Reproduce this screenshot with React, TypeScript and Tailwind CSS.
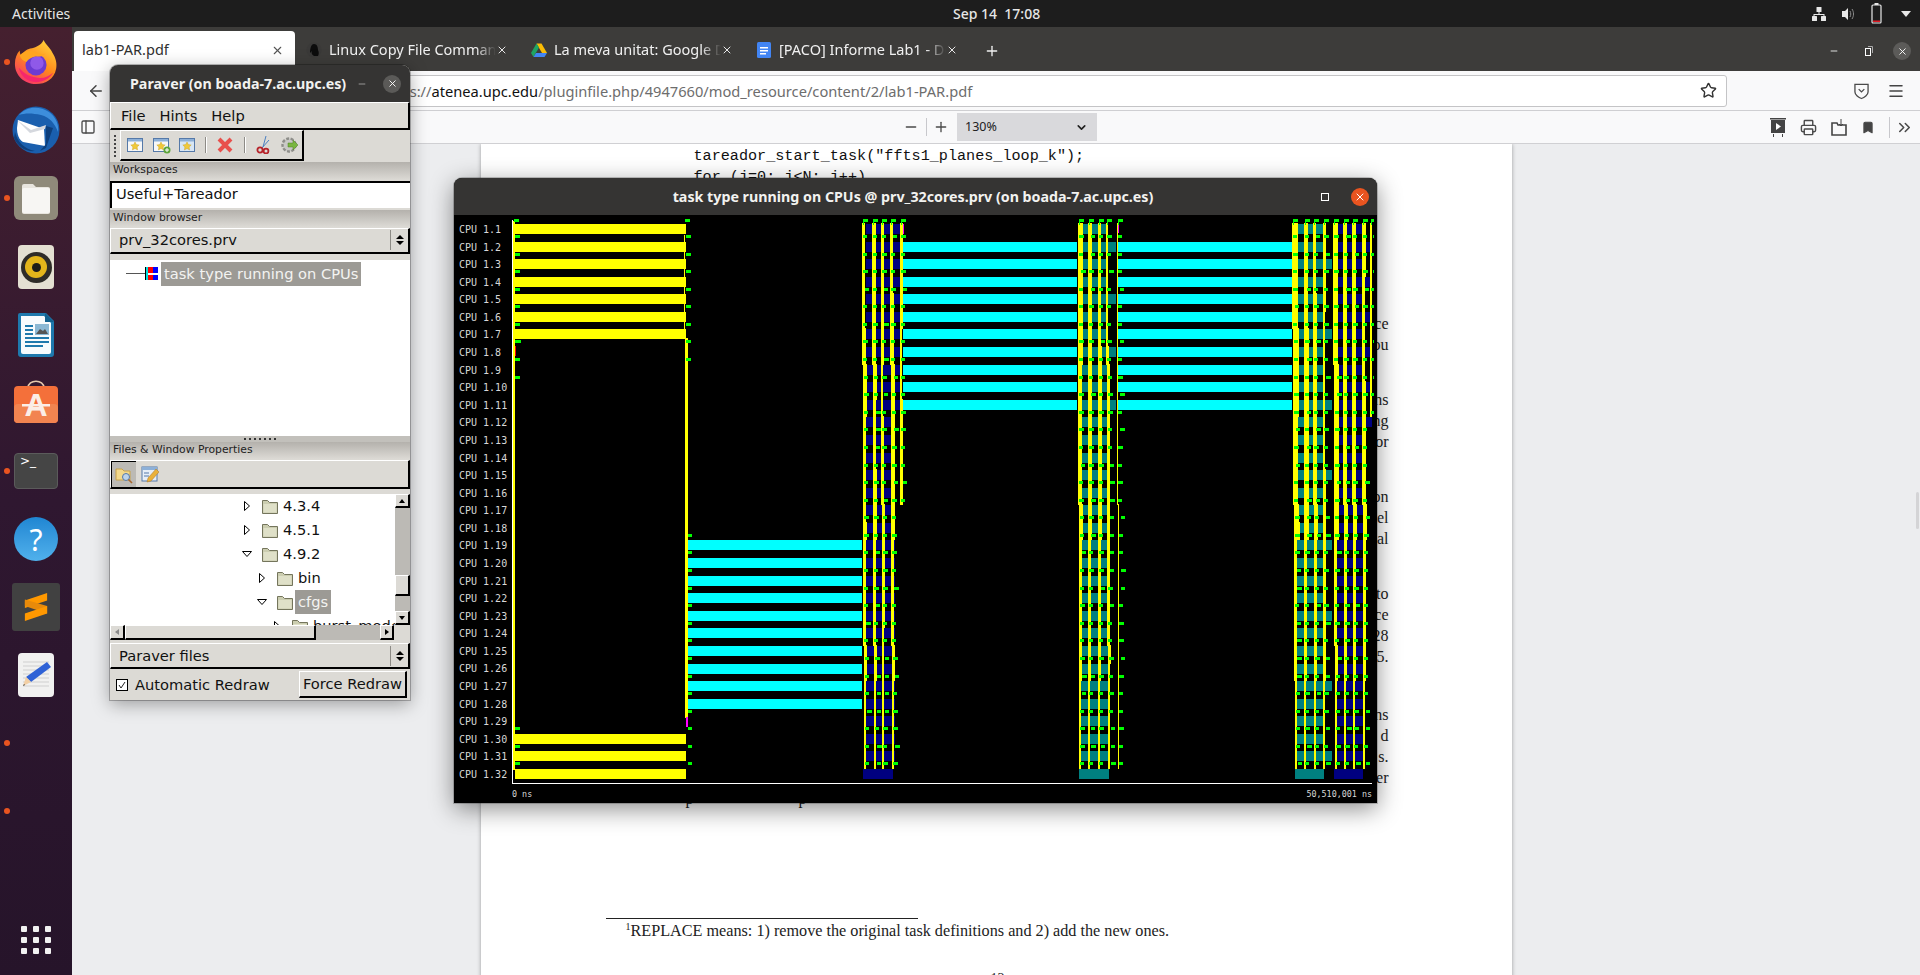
import { ArrowLeft, Bookmark, ChevronDown, ChevronsRight, Menu, Minus, PanelLeft, Plus, Printer, Star, X } from "lucide-react";

const gtk = { fontFamily: '"DejaVu Sans", sans-serif' };
const ui = { fontFamily: '"Noto Sans", "Open Sans", sans-serif' };

/* ---------- timeline data ---------- */
type R = { x: number; y: number; w: number; h: number; f: string };

const YELLOW = "#ffff00";
const CYAN = "#00ffff";
const GREEN = "#00ff00";
const NAVY = "#000080";
const TEAL = "#008080";
const MAGENTA = "#ff00ff";

const rowTop = (i: number) => Math.round(224 + 17.58 * i);

let seed = 4711;
const rnd = () => {
  seed = (seed * 16807) % 2147483647;
  return seed / 2147483647;
};

function buildChart() {
  const bars: R[] = [];
  const lines: R[] = [];
  const flags: R[] = [];
  const put = (a: R[], x: number, y: number, w: number, h: number, f: string) => a.push({ x, y, w, h, f });

  for (let r = 0; r < 32; r++) {
    const y = rowTop(r);
    if (r < 7) put(bars, 514, y, 172, 10, YELLOW);
    if (r >= 29) put(bars, 515, y, 171, 10, YELLOW);
    if (r >= 18 && r < 28) put(bars, 687, y, 175, 10, CYAN);
    if (r >= 1 && r < 11) {
      put(bars, 903, y, 174, 10, CYAN);
      put(bars, 1118, y, 174, 10, CYAN);
    }
    // task blocks of the three bursts
    if (r === 31) {
      put(bars, 863, y, 30, 10, NAVY);
      put(bars, 1079, y, 30, 10, TEAL);
      put(bars, 1295, y, 29, 10, TEAL);
      put(bars, 1334, y, 29, 10, NAVY);
    } else {
      put(bars, 866, y, r < 11 ? 35 : 29, 10, NAVY);
      put(bars, 1080, y, r % 3 === 1 && r < 12 ? 36 : 28, 10, TEAL);
      put(bars, 1295, y, r % 4 === 2 ? 37 : 28, 10, TEAL);
      put(bars, 1335, y, r < 12 && r % 2 === 1 ? 37 : 29, 10, NAVY);
    }
  }

  // long lines on both ends of the first block
  put(lines, 513, 221, 2, 549, YELLOW);
  put(lines, 685, 338, 3, 380, YELLOW);
  put(lines, 684, 235, 1, 100, YELLOW);
  put(lines, 515, 346, 1, 10, "#ff0000");
  put(lines, 686, 717, 2, 10, MAGENTA);
  put(lines, 903, 224, 1, 10, MAGENTA);
  put(lines, 1118, 225, 1, 8, MAGENTA);

  const columns = [
    { x: 862, xEnd: 864, to: 31, w: 4 },
    { x: 872, xEnd: 874, to: 31, w: 4 },
    { x: 881, xEnd: 882, to: 31, w: 3 },
    { x: 890, xEnd: 892, to: 31, w: 4 },
    { x: 900, xEnd: 900, to: 16, w: 3 },
    { x: 1078, xEnd: 1079, to: 31, w: 5 },
    { x: 1088, xEnd: 1088, to: 31, w: 4 },
    { x: 1098, xEnd: 1098, to: 31, w: 4 },
    { x: 1106, xEnd: 1108, to: 31, w: 3 },
    { x: 1117, xEnd: 1118, to: 31, w: 1 },
    { x: 1292, xEnd: 1295, to: 31, w: 6 },
    { x: 1304, xEnd: 1304, to: 31, w: 5 },
    { x: 1313, xEnd: 1314, to: 31, w: 4 },
    { x: 1323, xEnd: 1323, to: 31, w: 3 },
    { x: 1333, xEnd: 1335, to: 31, w: 5 },
    { x: 1343, xEnd: 1344, to: 31, w: 4 },
    { x: 1352, xEnd: 1353, to: 31, w: 4 },
    { x: 1362, xEnd: 1363, to: 31, w: 4 },
    { x: 1370, xEnd: 1370, to: 11, w: 2 },
  ];

  for (const c of columns) {
    // flag on top of the column
    put(flags, c.x + 1, 219, 5, 3, GREEN);
    put(flags, c.x + 1, 222, 1, 3, GREEN);
    let thick = c.w;
    let hold = 0;
    for (let r = 0; r < c.to; r++) {
      const base = Math.round(c.x + (c.xEnd - c.x) * (r / 31));
      if (hold <= 0) {
        thick = c.w - (rnd() < 0.3 && c.w > 2 ? 1 : 0);
        hold = 3 + Math.floor(rnd() * 5);
      }
      hold--;
      const w = r >= 26 ? Math.min(thick, 2) : r >= 18 ? Math.min(thick, 3) : thick;
      put(lines, base, rowTop(r) - 1, w, rowTop(r + 1) - rowTop(r) + 1, YELLOW);
      put(flags, base + 1 + (rnd() < 0.25 ? 2 : 0), rowTop(r) + 11, 4 + (rnd() < 0.3 ? 1 : 0), 3, GREEN);
    }
  }

  // flags around the first block
  for (let r = 0; r < 31; r++) {
    const y = rowTop(r) + 11;
    if (r < 9 || r >= 28) put(flags, 515, y, r === 6 ? 6 : 5, 3, GREEN);
    if (r < 8) put(flags, 686, y, 5, 3, GREEN);
    if (r >= 17) put(flags, 688, y, 4, 3, GREEN);
  }
  put(flags, 514, 219, 5, 3, GREEN);
  put(flags, 685, 219, 5, 3, GREEN);
  return [...bars, ...lines, ...flags];
}

const chartRects = buildChart();

function TimelineChart() {
  return (
    <svg viewBox="512 215 862 570" width={862} height={570} shapeRendering="crispEdges" className="block">
      <rect x={512} y={220} width={1} height={564} fill="#ffffff" />
      <rect x={512} y={783} width={860} height={1} fill="#ffffff" />
      {chartRects.map((r, i) => (
        <rect key={i} x={r.x} y={r.y} width={r.w} height={r.h} fill={r.f} />
      ))}
    </svg>
  );
}

/* ---------- dock icons ---------- */
function Firefox() {
  return (
    <svg viewBox="0 0 48 48" className="h-[46px] w-[46px]">
      <defs>
        <linearGradient id="ff" x1="0.8" y1="0" x2="0.2" y2="1">
          <stop offset="0" stopColor="#ffd43a" />
          <stop offset="0.5" stopColor="#ff8a1c" />
          <stop offset="1" stopColor="#f5306e" />
        </linearGradient>
      </defs>
      <path d="M32 1c2 5 7 8 9 13 4 6 5 12 4 17-2 11-11 16-21 16C12 47 2 38 2 26c0-6 2-11 5-14 0 3 1 5 2 6 1-4 5-7 9-8 5-1 11-3 14-9z" fill="url(#ff)" />
      <circle cx="24" cy="27" r="11" fill="#6b3bd1" />
      <circle cx="25" cy="25" r="7" fill="#8f59e8" />
      <path d="M7 17c5-5 12-6 18-3 3 2 6 2 9 1-3 3-7 4-10 3-5 1-8 3-10 6-3-1-6-3-7-7z" fill="#ffa51f" />
      <path d="M6 30c2 9 9 15 18 15 7 0 14-3 18-10-5 5-12 7-19 5-7-1-12-5-17-10z" fill="#f5276c" />
    </svg>
  );
}

function Thunderbird() {
  return (
    <svg viewBox="0 0 50 50" className="h-[50px] w-[50px]">
      <circle cx="25" cy="25" r="23.5" fill="#1a5fae" />
      <path d="M8 10c6-8 20-10 30-3 7 5 10 13 9 20-3-8-8-15-17-17C21 8 14 8 8 10z" fill="#3d8edc" />
      <path d="M7 15l26 9 0 0 1 17-22-4c-4-2-6-8-6-14z" fill="#ffffff" />
      <path d="M6 15l14 10 15-5-1 4-15 4z" fill="#d5d8de" />
      <path d="M35 21l7 2-7 20-6 3 6-7z" fill="#0e3f7c" />
      <path d="M4 27c2 9 9 17 20 19-9 1-17-4-21-13z" fill="#0e3f7c" />
    </svg>
  );
}

function Files() {
  return (
    <div className="flex h-[44px] w-[44px] items-center justify-center rounded-[6px] bg-[#8f8a7a]">
      <svg viewBox="0 0 32 32" className="h-[32px] w-[32px]">
        <path d="M2 4a2 2 0 012-2h9l3 3h12a2 2 0 012 2v23a2 2 0 01-2 2H4a2 2 0 01-2-2z" fill="#e8e5de" />
        <path d="M2 8a2 2 0 012-2h24a2 2 0 012 2v21a2 2 0 01-2 2H4a2 2 0 01-2-2z" fill="#f7f6f3" />
      </svg>
    </div>
  );
}

function Rhythmbox() {
  return (
    <div className="flex h-[44px] w-[36px] items-center justify-center rounded-[4px] bg-[#e4e0d2]">
      <div className="flex h-[31px] w-[31px] items-center justify-center rounded-full bg-[#2e2c28]">
        <div className="flex h-[22px] w-[22px] items-center justify-center rounded-full bg-[#e3b51b]">
          <div className="h-[9px] w-[9px] rounded-full bg-[#1d1c19]" />
        </div>
      </div>
    </div>
  );
}

function Writer() {
  return (
    <svg viewBox="0 0 36 44" className="h-[44px] w-[36px]">
      <path d="M2 0h26l8 8v33a3 3 0 01-3 3H3a3 3 0 01-3-3V2a2 2 0 012-2z" fill="#1e79ad" />
      <path d="M3 3h23l7 7v29a2 2 0 01-2 2H5a2 2 0 01-2-2z" fill="#f7fbfd" />
      <path d="M27 0l9 9h-9z" fill="#13618e" />
      <rect x="7" y="12" width="8" height="2" fill="#1e79ad" />
      <rect x="7" y="16" width="8" height="2" fill="#1e79ad" />
      <rect x="7" y="20" width="8" height="2" fill="#1e79ad" />
      <rect x="17" y="11" width="14" height="11" fill="#8bb8d4" />
      <path d="M18 21l4-5 3 2 2-2 3 5z" fill="#555" />
      <rect x="7" y="24" width="24" height="2" fill="#1e79ad" />
      <rect x="7" y="28" width="24" height="2" fill="#1e79ad" />
      <rect x="7" y="32" width="18" height="2" fill="#1e79ad" />
    </svg>
  );
}

function Software() {
  return (
    <svg viewBox="0 0 46 44" className="h-[44px] w-[46px]">
      <path d="M15 8c0-9 16-9 16 0" fill="none" stroke="#e7c9ad" strokeWidth="1.6" />
      <rect x="1" y="6" width="44" height="37" rx="4" fill="#f4703a" />
      <rect x="1" y="24" width="44" height="19" rx="4" fill="#f28450" />
      <text x="23" y="36" textAnchor="middle" fontSize="32" fontWeight="700" fill="#fbeee7" fontFamily="Liberation Sans, sans-serif">A</text>
      <rect x="9" y="24" width="28" height="2.5" fill="#fbeee7" />
    </svg>
  );
}

function Terminal() {
  return (
    <div className="h-[36px] w-[44px] rounded-[4px] border border-[#5b5b5b] bg-[#454545] pl-[5px] text-[12px] leading-[14px] text-white" style={gtk}>
      &gt;_
    </div>
  );
}

function Help() {
  return (
    <div className="flex h-[44px] w-[44px] items-center justify-center rounded-full bg-gradient-to-b from-[#1f86d2] to-[#50b1ec] text-[30px] text-white" style={ui}>
      ?
    </div>
  );
}

function Sublime() {
  return (
    <div className="flex h-[48px] w-[48px] items-center justify-center rounded-[3px] bg-[#414141]">
      <svg viewBox="0 0 28 32" className="h-[32px] w-[26px]">
        <path d="M26 1L2 9v8l24-8z" fill="#ff9800" />
        <path d="M2 15l24 8v-8L2 8z" fill="#e88a0a" />
        <path d="M26 15L2 23v8l24-8z" fill="#ff9800" />
      </svg>
    </div>
  );
}

function Gedit() {
  return (
    <svg viewBox="0 0 36 44" className="h-[44px] w-[36px]">
      <rect width="36" height="44" rx="4" fill="#f1f1f0" />
      <g stroke="#cfcfcf" strokeWidth="1">
        <path d="M5 9h26M5 13h26M5 17h26M5 21h26M5 25h26M5 29h26M5 33h26" />
      </g>
      <path d="M29 9l4 5-20 15-5-5z" fill="#2f62d6" />
      <path d="M8 24l5 5-8 4z" fill="#f2cfa4" />
      <path d="M6 31l-1 2 2-1z" fill="#333" />
    </svg>
  );
}

function DockItem({ children, running, className }: { children: React.ReactNode; running?: boolean; className: string }) {
  return (
    <div className={`relative flex w-[72px] items-center justify-center ${className}`}>
      {running && <div className="absolute top-1/2 left-[4px] h-[6px] w-[6px] -translate-y-1/2 rounded-full bg-[#e95420]" />}
      {children}
    </div>
  );
}

function Dock() {
  return (
    <div className="flex h-full w-[72px] shrink-0 flex-col bg-gradient-to-b from-[#45202f] via-[#2f1730] to-[#26142a]">
      <DockItem running className="mt-[5px] h-[60px]"><Firefox /></DockItem>
      <DockItem className="mt-[8px] h-[60px]"><Thunderbird /></DockItem>
      <DockItem running className="mt-[8px] h-[60px]"><Files /></DockItem>
      <DockItem className="mt-[9px] h-[60px]"><Rhythmbox /></DockItem>
      <DockItem className="mt-[8px] h-[60px]"><Writer /></DockItem>
      <DockItem className="mt-[7px] h-[60px]"><Software /></DockItem>
      <DockItem running className="mt-[9px] h-[60px]"><Terminal /></DockItem>
      <DockItem className="mt-[8px] h-[60px]"><Help /></DockItem>
      <DockItem className="mt-[8px] h-[60px]"><Sublime /></DockItem>
      <DockItem className="mt-[8px] h-[60px]"><Gedit /></DockItem>
      <DockItem running className="mt-[8px] h-[60px]"><span /></DockItem>
      <DockItem running className="mt-[8px] h-[60px]"><span /></DockItem>
      <div className="mx-auto mt-[85px] grid w-[30px] grid-cols-3 gap-x-[6px] gap-y-[5px]">
        {Array.from({ length: 9 }).map((_, i) => (
          <div key={i} className="h-[6px] w-[6px] rounded-[1px] bg-[#f2f2f2]" />
        ))}
      </div>
    </div>
  );
}

/* ---------- top panel ---------- */
function TopBar() {
  return (
    <div className="relative flex h-[27px] shrink-0 items-center bg-[#1d1d1d] pl-[12px] text-[14px] text-[#e6e6e6]" style={ui}>
      <span>Activities</span>
      <span className="absolute left-[953px] font-medium whitespace-pre">Sep 14  17:08</span>
      <div className="ml-auto flex items-center gap-[13px] pr-[9px]">
        <svg viewBox="0 0 16 16" className="h-[16px] w-[16px]" fill="#e8e8e8">
          <rect x="5.5" y="1" width="5" height="5" rx="0.5" />
          <rect x="1" y="10" width="5" height="5" rx="0.5" />
          <rect x="10" y="10" width="5" height="5" rx="0.5" />
          <path d="M7.5 6h1v2h5v2h-1V9h-9v1h-1V8h5z" />
        </svg>
        <svg viewBox="0 0 16 16" className="h-[16px] w-[16px]">
          <path d="M2 5h3l3-3v12l-3-3H2z" fill="#e8e8e8" />
          <path d="M10 5c1 2 1 4 0 6M12 3c2 3 2 7 0 10" stroke="#8c8c8c" fill="none" />
        </svg>
        <svg viewBox="0 0 12 24" className="ml-[2px] h-[24px] w-[12px]">
          <rect x="1" y="3" width="9" height="18" rx="1" fill="none" stroke="#e8e8e8" strokeWidth="1.2" />
          <rect x="3.5" y="1" width="4" height="2" fill="#e8e8e8" />
          <rect x="2" y="18.5" width="7" height="1.5" fill="#e01b24" />
        </svg>
        <div className="ml-[5px] h-0 w-0 border-x-[5px] border-t-[6px] border-x-transparent border-t-[#e8e8e8]" />
      </div>
    </div>
  );
}

/* ---------- browser ---------- */
function Tab({ title, icon, gap }: { title: string; icon: React.ReactNode; gap: string }) {
  return (
    <div className={`relative mb-[1px] flex h-[40px] w-[202px] items-center text-[14.5px] text-[#f0f0f0] ${gap}`}>
      <span className="h-[16px] w-[16px] shrink-0">{icon}</span>
      <span className="ml-[7px] overflow-hidden whitespace-nowrap [mask-image:linear-gradient(to_left,transparent,black_20px)]">{title}</span>
      <X className="ml-auto h-[12px] w-[12px] shrink-0 pl-0 text-[#e8e8e8]" />
    </div>
  );
}

function TabBar() {
  return (
    <div className="flex h-[44px] shrink-0 items-end bg-[#3d3c3a] pl-[2px]" style={ui}>
      <div className="flex h-[40px] w-[221px] items-center rounded-t-[4px] bg-white pr-[11px] pb-[2px] pl-[8px] text-[14.5px] text-[#30302f]">
        <span>lab1-PAR.pdf</span>
        <X className="ml-auto h-[13px] w-[13px] text-[#555]" />
      </div>
      <Tab
        gap="ml-[11px]"
        title="Linux Copy File Command"
        icon={
          <svg viewBox="0 0 16 16">
            <circle cx="8" cy="8" r="7.5" fill="#3a3938" />
            <path d="M8 2c3 0 4 3 4 6 1 2 1 4 0 6H8c-2-1-3-3-2-5l-2 2c0-4 1-9 4-9z" fill="#0c0c0c" />
          </svg>
        }
      />
      <Tab
        gap="ml-[23px]"
        title="La meva unitat: Google D"
        icon={
          <svg viewBox="0 0 16 16">
            <path d="M5.5 1.5h5L16 11h-5z" fill="#fbbc04" />
            <path d="M5.5 1.5L0 11l2.5 4 5.5-9.5z" fill="#1fa463" />
            <path d="M2.5 15h11l2.5-4H5z" fill="#4285f4" />
          </svg>
        }
      />
      <Tab
        gap="ml-[23px]"
        title="[PACO] Informe Lab1 - Do"
        icon={
          <svg viewBox="0 0 16 16">
            <rect x="1" y="0" width="14" height="16" rx="1.5" fill="#4285f4" />
            <path d="M4 5h8v1.4H4zM4 8h8v1.4H4zM4 11h6v1.4H4z" fill="#fff" />
          </svg>
        }
      />
      <Plus className="mb-[12px] ml-[26px] h-[16px] w-[16px] text-[#f0f0f0]" />
      <div className="mb-[11px] ml-auto flex items-center pr-[9px]">
        <Minus className="h-[10px] w-[10px] text-white" />
        <svg viewBox="0 0 10 12" className="ml-[25px] h-[12px] w-[10px]" fill="none" stroke="#fff">
          <rect x="1.5" y="3.5" width="5" height="7" />
          <path d="M4 1.5h4.5V8" stroke="#aaa" />
        </svg>
        <div className="ml-[19px] flex h-[18px] w-[18px] items-center justify-center rounded-full bg-[#5c5b59]">
          <X className="h-[11px] w-[11px] text-white" />
        </div>
      </div>
    </div>
  );
}

function NavBar() {
  return (
    <div className="flex h-[40px] shrink-0 items-center border-b border-[#cfcfd2] bg-[#f9f9fa]" style={ui}>
      <ArrowLeft className="ml-[15px] h-[18px] w-[18px] text-[#444]" />
      <div className="ml-[25px] flex h-[32px] w-[1597px] items-center rounded-[3px] border border-[#c4c4c6] bg-white pr-[9px] pl-[250px] text-[14.67px] whitespace-nowrap text-[#6d6d6d]">
        <span>https://</span>
        <span className="text-[#111]">atenea.upc.edu</span>
        <span>/pluginfile.php/4947660/mod_resource/content/2/lab1-PAR.pdf</span>
        <Star className="ml-auto h-[17px] w-[17px] text-[#333]" />
      </div>
      <svg viewBox="0 0 16 18" className="ml-[127px] h-[18px] w-[15px]" fill="none" stroke="#4a4a4a" strokeWidth="1.4">
        <path d="M1 2h14v8c0 3-4 6-7 7-3-1-7-4-7-7z" />
        <path d="M5 7l3 3 3-3" />
      </svg>
      <Menu className="ml-[18px] h-[18px] w-[18px] text-[#444]" />
    </div>
  );
}

function PdfToolbar() {
  return (
    <div className="flex h-[33px] shrink-0 items-center border-b border-[#d0d0d3] bg-[#f9f9fa] text-[#4a4a4a]" style={ui}>
      <PanelLeft className="ml-[8px] h-[16px] w-[16px]" />
      <Minus className="ml-[807px] h-[16px] w-[16px]" />
      <div className="ml-[7px] h-[18px] w-px bg-[#c8c8cc]" />
      <Plus className="ml-[6px] h-[16px] w-[16px]" />
      <div className="ml-[8px] flex h-[28px] w-[140px] items-center bg-[#d9d9dc] pr-[9px] pl-[8px] text-[12.5px] text-[#222]">
        130%
        <ChevronDown className="ml-auto h-[13px] w-[13px] stroke-[3]" />
      </div>
      <div className="ml-auto flex items-center gap-[14px] pr-[6px]">
        <svg viewBox="0 0 16 20" className="h-[20px] w-[16px]" fill="#444">
          <rect x="0" y="1" width="16" height="1.5" />
          <rect x="1" y="3" width="14" height="13" />
          <path d="M6 6l5 3.5-5 3.5z" fill="#fff" />
          <rect x="3" y="17" width="1" height="3" />
          <rect x="12" y="17" width="1" height="3" />
        </svg>
        <Printer className="h-[17px] w-[17px]" />
        <svg viewBox="0 0 16 18" className="h-[18px] w-[16px]" fill="none" stroke="#444" strokeWidth="1.6">
          <path d="M1 5h5l1 2h8v10H1z" />
          <path d="M10 1v7M8 6l2 2 2-2" strokeWidth="1" />
        </svg>
        <Bookmark className="h-[17px] w-[14px] fill-[#444]" />
        <div className="h-[21px] w-px bg-[#c8c8cc]" />
        <ChevronsRight className="-ml-[9px] h-[19px] w-[19px]" />
      </div>
    </div>
  );
}

const marginEnds = [
  ["ce", "ou"],
  ["ns", "ng", "or"],
  ["on", "el", "al"],
  ["to", "ce", "28", "5."],
  ["ns", "d", "s.", "er"],
];

function PdfPage() {
  return (
    <div className="mx-auto h-[900px] w-[1031px] bg-white pt-[2px] text-[#222] shadow-[0_0_4px_rgba(0,0,0,0.35)]">
      <div className="pl-[213px] text-[15.15px] leading-[21px] text-[#111]" style={{ fontFamily: '"Liberation Mono", monospace' }}>
        <div>tareador_start_task("ffts1_planes_loop_k");</div>
        <div>for (j=0; j&lt;N; j++)</div>
      </div>
      <div className="mt-[125px] pr-[123px] text-right text-[16px] leading-[21px]" style={{ fontFamily: '"Liberation Serif", serif' }}>
        {marginEnds.map((lines, i) => (
          <div key={i} className={i === 0 ? "" : i === 4 ? "mt-[37px]" : "mt-[34px]"}>
            {lines.map((l, j) => (
              <div key={j}>{l}</div>
            ))}
          </div>
        ))}
      </div>
      <div className="flex h-[21px] pl-[205px] text-[16px] leading-[21px]" style={{ fontFamily: '"Liberation Serif", serif' }}>
        <span>p</span>
        <span className="ml-[105px]">p</span>
      </div>
      <div className="mt-[109px] ml-[125px] h-px w-[312px] bg-[#222]" />
      <div className="mt-[3px] pl-[145px] text-[16.2px] leading-[18px]" style={{ fontFamily: '"Liberation Serif", serif' }}>
        <span className="align-super text-[10px] leading-none">1</span>REPLACE means: 1) remove the original task definitions and 2) add the new ones.
      </div>
      <div className="mt-[30px] pl-[510px] text-[14px] leading-[18px]" style={{ fontFamily: '"Liberation Serif", serif' }}>12</div>
    </div>
  );
}

/* ---------- paraver main window ---------- */
function StarDoc({ plus, framed }: { plus?: boolean; framed?: boolean }) {
  return (
    <svg viewBox="0 0 18 18" className="h-[18px] w-[18px]">
      <rect x="0.5" y="2.5" width="15" height="13" fill={framed ? "#d8e6f4" : "#f7f7f7"} stroke="#5579a8" />
      <rect x="1" y="3" width="14" height="2.5" fill="#8db0d8" />
      <path d="M8 6l1.3 2.6 2.9.4-2.1 2 .5 2.9L8 12.5l-2.6 1.4.5-2.9-2.1-2 2.9-.4z" fill="#f0c93a" stroke="#c59a17" strokeWidth="0.4" />
      {plus && <circle cx="14" cy="14" r="3.5" fill="#5da53a" />}
      {plus && <path d="M12 14h4M14 12v4" stroke="#fff" />}
    </svg>
  );
}

function Raised({ className, children }: { className: string; children?: React.ReactNode }) {
  return <div className={`border-t border-r-2 border-b-2 border-l border-t-white border-r-black border-b-black border-l-white ${className}`}>{children}</div>;
}

function SectionLabel({ children, className }: { children: string; className: string }) {
  return <div className={`bg-gradient-to-b from-[#b4b1ac] to-[#dcdad5] pl-[3px] text-[10.8px] leading-[16px] text-[#222] ${className}`}>{children}</div>;
}

function ComboArrows() {
  return (
    <div className="ml-auto flex h-full items-center">
      <div className="mr-[5px] h-[20px] w-px border-l border-[#8d8b86] bg-white" />
      <div className="mr-[4px] flex flex-col gap-[2px]">
        <div className="h-0 w-0 border-x-[4px] border-b-[4px] border-x-transparent border-b-black" />
        <div className="h-0 w-0 border-x-[4px] border-t-[4px] border-x-transparent border-t-black" />
      </div>
    </div>
  );
}

function Folder() {
  return (
    <svg viewBox="0 0 16 15" className="h-[15px] w-[16px] shrink-0">
      <path d="M.5 1.5h5l2 2h8v11H.5z" fill="#cbcdb0" stroke="#74755c" />
      <rect x="1.5" y="5" width="13" height="8.5" fill="#dfe0c8" />
    </svg>
  );
}

function TreeRow({ indent, open, label, selected }: { indent: string; open?: boolean; label: string; selected?: boolean }) {
  return (
    <div className={`flex items-center ${indent}`}>
      <svg viewBox="0 0 10 10" className="h-[10px] w-[10px] shrink-0" fill="#fff" stroke="#000">
        {open ? <path d="M.5 2.5h9L5 7.5z" /> : <path d="M2.5.5v9L7.5 5z" />}
      </svg>
      <span className="ml-[10px]"><Folder /></span>
      <span className={`ml-[2px] px-[3px] leading-[24px] ${selected ? "bg-[#9c9a95] text-[#f3f3f1]" : "text-[#111]"}`}>{label}</span>
    </div>
  );
}

function ParaverWindow() {
  return (
    <div className="absolute top-[65px] left-[110px] flex h-[635px] w-[300px] flex-col overflow-hidden rounded-t-[8px] bg-[#dcdad5] shadow-[0_4px_18px_rgba(0,0,0,0.35),0_0_0_1px_rgba(0,0,0,0.25)]" style={gtk}>
      <div className="flex h-[37px] shrink-0 items-center bg-[#353433] pl-[20px] text-[14.25px] font-bold text-[#f2f2f0]" style={ui}>
        <span className="whitespace-nowrap">Paraver (on boada-7.ac.upc.es)</span>
        <Minus className="ml-[11px] h-[10px] w-[10px] text-[#aaa]" />
        <div className="ml-[16px] flex h-[18px] w-[18px] items-center justify-center rounded-full bg-[#5b5a58]">
          <X className="h-[11px] w-[11px] text-white" />
        </div>
      </div>
      <Raised className="flex h-[28px] shrink-0 items-center gap-[14px] pt-[1px] pl-[10px] text-[14.67px] text-[#111]">
        <span>File</span>
        <span>Hints</span>
        <span>Help</span>
      </Raised>
      <div className="flex h-[31px] shrink-0">
        <div className="flex w-[10px] flex-col items-center justify-center gap-[2px]">
          {Array.from({ length: 6 }).map((_, i) => (
            <div key={i} className="h-[2px] w-[2px] bg-[#444]" />
          ))}
        </div>
        <Raised className="flex w-[184px] items-center pl-[6px]">
          <StarDoc />
          <span className="ml-[8px]"><StarDoc plus /></span>
          <span className="ml-[8px]"><StarDoc framed /></span>
          <div className="ml-[8px] h-[16px] w-[2px] border-l border-[#8d8b86] bg-white" />
          <svg viewBox="0 0 16 16" className="ml-[10px] h-[16px] w-[16px]" stroke="#e8504c" strokeWidth="4">
            <path d="M2 2l12 12M14 2L2 14" />
          </svg>
          <div className="ml-[11px] h-[16px] w-[2px] border-l border-[#8d8b86] bg-white" />
          <svg viewBox="0 0 16 18" className="ml-[10px] h-[18px] w-[16px]" fill="none">
            <path d="M10 0L7 11M13 4L6 12" stroke="#4a7fc0" />
            <circle cx="4" cy="14" r="2.6" stroke="#b6232a" strokeWidth="1.8" />
            <circle cx="10" cy="15" r="2.4" stroke="#b6232a" strokeWidth="1.8" />
          </svg>
          <svg viewBox="0 0 18 18" className="ml-[9px] h-[18px] w-[18px]">
            <circle cx="8" cy="9" r="6.5" fill="#c9c9c6" stroke="#8e8e8a" strokeWidth="2.4" strokeDasharray="3 1.5" />
            <path d="M7 7h5V4l5 5-5 5v-3H7z" fill="#79b63f" stroke="#4e7f22" strokeWidth="0.5" />
          </svg>
        </Raised>
      </div>
      <SectionLabel className="mt-[1px] h-[18px] shrink-0">Workspaces</SectionLabel>
      <div className="mt-[1px] flex h-[27px] shrink-0 items-center border-t-2 border-l-2 border-t-black border-l-black bg-white pb-[3px] pl-[4px] text-[14.67px] text-[#111] shadow-[inset_0_-1px_0_#fff]">Useful+Tareador</div>
      <SectionLabel className="mt-[2px] h-[17px] shrink-0">Window browser</SectionLabel>
      <Raised className="mt-[1px] flex h-[26px] shrink-0 items-center pb-[2px] pl-[8px] text-[14.67px] text-[#111]">
        prv_32cores.prv
        <ComboArrows />
      </Raised>
      <div className="mt-[6px] flex h-[176px] shrink-0 items-start bg-white pt-[2px] pl-[16px]">
        <div className="mt-[11px] h-px w-[19px] bg-[#555]" />
        <svg viewBox="0 0 13 13" className="mt-[5px] h-[13px] w-[13px]" shapeRendering="crispEdges">
          <rect x="0" y="0" width="1" height="13" fill="#000" />
          <rect x="1" y="0" width="2" height="13" fill="#00e0e0" />
          <rect x="3" y="0" width="10" height="6" fill="#0000ff" />
          <rect x="3" y="0" width="5" height="6" fill="#ff0000" />
          <rect x="3" y="8" width="10" height="5" fill="#0000ff" />
          <rect x="3" y="8" width="5" height="5" fill="#ff0000" />
        </svg>
        <span className="ml-[3px] bg-[#9c9a95] px-[3px] text-[14.67px] leading-[24px] whitespace-nowrap text-[#f3f3f1]">task type running on CPUs</span>
      </div>
      <div className="flex h-[6px] shrink-0 items-center justify-center gap-[3px] bg-[#c2c0bb]">
        {Array.from({ length: 7 }).map((_, i) => (
          <div key={i} className="h-[2px] w-[2px] bg-[#333]" />
        ))}
      </div>
      <SectionLabel className="h-[17px] shrink-0">{"Files & Window Properties"}</SectionLabel>
      <Raised className="mt-[1px] flex h-[29px] shrink-0 items-center gap-[5px]">
        <div className="flex h-[26px] w-[25px] items-center justify-center border-t border-l border-t-black border-l-black bg-[#bcbab5]">
          <svg viewBox="0 0 18 18" className="h-[18px] w-[18px]">
            <path d="M1 3h6l2 2h6v9H1z" fill="#f3d98b" stroke="#c8a24a" />
            <circle cx="11" cy="11" r="3.5" fill="#bcd3ea" stroke="#5579a8" />
            <path d="M13.5 13.5L17 17" stroke="#a8652a" strokeWidth="1.6" />
          </svg>
        </div>
        <svg viewBox="0 0 18 18" className="h-[18px] w-[18px]">
          <rect x="1" y="2" width="15" height="14" fill="#e6eef7" stroke="#5579a8" />
          <rect x="1" y="2" width="15" height="3" fill="#8db0d8" />
          <path d="M3 8h5M3 11h5" stroke="#5579a8" />
          <path d="M15 4l3 3-8 9-4 1 1-4z" fill="#eab13a" stroke="#a8752a" strokeWidth="0.5" />
        </svg>
      </Raised>
      <div className="mt-[5px] flex h-[131px] shrink-0">
        <div className="h-full w-[285px] overflow-hidden bg-white text-[14.67px]">
          <TreeRow indent="pl-[132px]" label="4.3.4" />
          <TreeRow indent="pl-[132px]" label="4.5.1" />
          <TreeRow indent="pl-[132px]" open label="4.9.2" />
          <TreeRow indent="pl-[147px]" label="bin" />
          <TreeRow indent="pl-[147px]" open selected label="cfgs" />
          <TreeRow indent="pl-[162px]" label="burst_mode" />
        </div>
        <div className="flex h-full w-[15px] flex-col bg-[#bcbab5]">
          <Raised className="flex h-[14px] shrink-0 items-center justify-center bg-[#dcdad5]">
            <div className="h-0 w-0 border-x-[3px] border-b-[4px] border-x-transparent border-b-black" />
          </Raised>
          <Raised className="mt-[67px] h-[21px] shrink-0 bg-[#dcdad5]" />
          <Raised className="mt-auto flex h-[14px] shrink-0 items-center justify-center bg-[#dcdad5]">
            <div className="h-0 w-0 border-x-[3px] border-t-[4px] border-x-transparent border-t-black" />
          </Raised>
        </div>
      </div>
      <div className="flex h-[15px] w-[284px] shrink-0 bg-[#bcbab5]">
        <Raised className="flex w-[15px] items-center justify-center bg-[#dcdad5]">
          <div className="h-0 w-0 border-y-[3px] border-r-[4px] border-y-transparent border-r-[#888]" />
        </Raised>
        <Raised className="w-[191px] bg-[#dcdad5]" />
        <Raised className="ml-auto flex w-[14px] items-center justify-center bg-[#dcdad5]">
          <div className="h-0 w-0 border-y-[3px] border-l-[4px] border-y-transparent border-l-black" />
        </Raised>
      </div>
      <Raised className="mt-[3px] flex h-[26px] shrink-0 items-center pl-[8px] text-[14.67px] text-[#111]">
        Paraver files
        <ComboArrows />
      </Raised>
      <div className="flex flex-1 items-center pl-[6px] text-[14.67px] text-[#111]">
        <div className="flex h-[12px] w-[12px] items-center justify-center border border-black bg-white">
          <svg viewBox="0 0 10 10" className="h-[10px] w-[10px]" fill="none" stroke="#222">
            <path d="M2 5l2 3 4-6" />
          </svg>
        </div>
        <span className="ml-[7px]">Automatic Redraw</span>
        <Raised className="mr-[3px] ml-auto flex h-[27px] w-[108px] items-center justify-center">Force Redraw</Raised>
      </div>
    </div>
  );
}

/* ---------- timeline window ---------- */
function TimelineWindow() {
  const rows = Array.from({ length: 32 }, (_, i) => `CPU 1.${i + 1}`);
  return (
    <div className="absolute top-[178px] left-[454px] flex h-[625px] w-[923px] flex-col overflow-hidden rounded-t-[8px] bg-black shadow-[0_6px_24px_rgba(0,0,0,0.45),0_0_0_1px_rgba(0,0,0,0.2)]">
      <div className="relative flex h-[37px] shrink-0 items-center justify-center bg-[#353433] text-[14.25px] font-bold text-[#f2f2f0]" style={ui}>
        <span className="-ml-[5px]">task type running on CPUs @ prv_32cores.prv (on boada-7.ac.upc.es)</span>
        <div className="absolute right-[48px] h-[8px] w-[8px] border border-white" />
        <div className="absolute right-[8px] flex h-[18px] w-[18px] items-center justify-center rounded-full bg-[#e95420]">
          <X className="h-[12px] w-[12px] text-white" />
        </div>
      </div>
      <div className="flex">
        <div className="w-[58px] shrink-0 pt-[6px] pl-[5px] text-[10px] whitespace-pre text-[#d8d8d8]" style={{ fontFamily: '"DejaVu Sans Mono", monospace' }}>
          {rows.map((r) => (
            <div key={r} className="h-[17.58px] leading-[17.58px]">{r}</div>
          ))}
        </div>
        <TimelineChart />
      </div>
      <div className="mt-[2px] flex justify-between pr-[5px] pl-[58px] text-[8.4px] leading-[14px] text-[#d8d8d8]" style={{ fontFamily: '"DejaVu Sans Mono", monospace' }}>
        <span>0 ns</span>
        <span>50,510,001 ns</span>
      </div>
    </div>
  );
}

export default function App() {
  return (
    <div className="relative flex h-[975px] w-[1920px] flex-col overflow-hidden bg-[#ecedef]">
      <TopBar />
      <div className="flex min-h-0 flex-1">
        <Dock />
        <div className="flex min-w-0 flex-1 flex-col">
          <TabBar />
          <NavBar />
          <PdfToolbar />
          <div className="min-h-0 flex-1 overflow-hidden bg-[#ecedef]">
            <PdfPage />
          </div>
        </div>
      </div>
      <div className="absolute top-[492px] right-[1px] h-[37px] w-[3px] rounded-full bg-[#d4d4d6]" />
      <ParaverWindow />
      <TimelineWindow />
    </div>
  );
}
